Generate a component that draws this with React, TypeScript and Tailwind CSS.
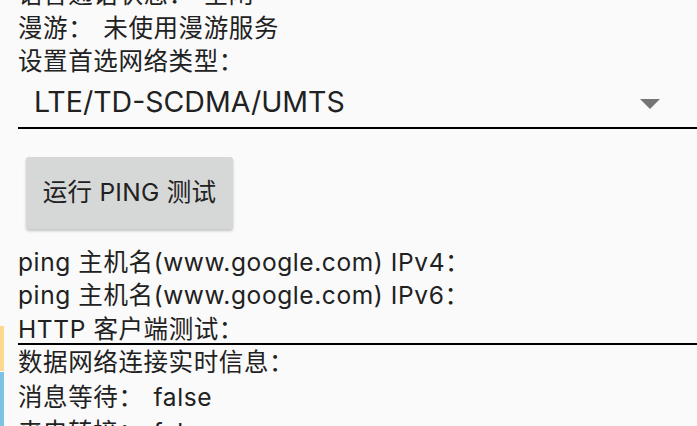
import React from 'react';

const font = { fontFamily: 'Inter, "Noto Sans CJK SC", sans-serif' };

function InfoRow({ label, value, tall }: { label: string; value?: string; tall?: boolean }) {
  return (
    <div
      className={`flex items-center text-[24.5px] tracking-[0.6px] whitespace-nowrap ${
        tall ? 'h-[35px] leading-[35px]' : 'h-[33.5px] leading-[33.5px]'
      }`}
    >
      <span>{label}</span>
      {value && <span className="ml-[10px]">{value}</span>}
    </div>
  );
}

export default function App() {
  return (
    <div className="relative w-[697px] h-[426px] overflow-hidden bg-[#fafafa] text-[#212121]" style={font}>
      {/* 左侧彩色标记 */}
      <div className="absolute left-0 top-[326px] h-[45px] w-[4px] bg-[#fcd98e]" />
      <div className="absolute left-0 top-[372px] h-[54px] w-[4px] bg-[#7cc3e6]" />

      <div className="flex flex-col pl-[18px] mt-[-22px]">
        <InfoRow label="语音通话状态：" value="空闲" />
        <InfoRow label="漫游：" value="未使用漫游服务" />
        <InfoRow label="设置首选网络类型：" />

        {/* 网络类型下拉框 */}
        <div className="flex h-[50px] items-center justify-between border-b-2 border-black pl-[16px] pr-[37px]">
          <span className="text-[28.5px] leading-none">LTE/TD-SCDMA/UMTS</span>
          <svg width="20" height="10" viewBox="0 0 20 10" className="mt-[2px]">
            <path d="M0 0 L20 0 L10 10 Z" fill="#757575" />
          </svg>
        </div>

        <div className="pl-[8px] pt-[28px] pb-[17px]">
          <button className="w-[207px] h-[72px] rounded-[3px] bg-[#d6d7d7] shadow-[0_2px_3px_rgba(0,0,0,0.22)] text-[24.5px] tracking-[0.3px] text-[#212121]">
            运行 PING 测试
          </button>
        </div>

        <InfoRow label="ping 主机名(www.google.com) IPv4：" />
        <InfoRow label="ping 主机名(www.google.com) IPv6：" />
        <InfoRow label="HTTP 客户端测试：" />
        <div className="h-[2px] bg-black mt-[-3px]" />
        <InfoRow label="数据网络连接实时信息：" tall />
        <InfoRow label="消息等待：" value="false" tall />
        <InfoRow label="来电转接：" value="false" tall />
      </div>
    </div>
  );
}
